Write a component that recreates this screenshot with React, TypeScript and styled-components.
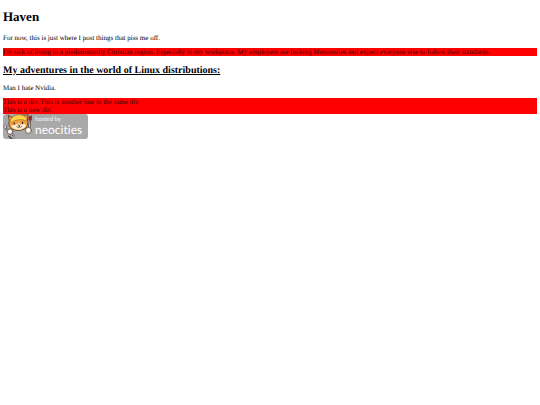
import React from "react";
import styled, { createGlobalStyle } from "styled-components";

const GlobalStyle = createGlobalStyle`
  body {
    margin: 0;
    background: #fff;
    color: #000;
    font-family: "Liberation Serif", "Times New Roman", serif;
    font-size: 7px;
    line-height: 8px;
    text-rendering: geometricPrecision;
  }
`;

const Page = styled.main`
  padding: 9px 3px 3px;
`;

const Title = styled.h1`
  margin: 0 0 9px;
  font-size: 13px;
  line-height: 16px;
`;

const Heading = styled.h2`
  margin: 9px 0 7px;
  font-size: 10px;
  line-height: 12px;
  text-decoration: underline;
`;

const Text = styled.p<{ $red?: boolean }>`
  margin: 0 0 6px;
  color: ${({ $red }) => ($red ? "#400" : "#000")};
  background: ${({ $red }) => ($red ? "#f00" : "transparent")};
`;

const Block = styled.div`
  color: #400;
  background: #f00;
`;

const BadgeLink = styled.a`
  display: block;
  width: fit-content;
`;

const BadgeArt = styled.svg`
  display: block;
  width: 85px;
  height: 25px;
  font-family: Lato, "Open Sans", sans-serif;
  font-variant-ligatures: none;
  line-height: 1;
`;

function NeocitiesBadge() {
  return (
    <BadgeArt viewBox="0 0 85 25" role="img" aria-label="Hosted by Neocities">
      <rect width="85" height="25" rx="3" fill="#a9a9a9" />
      <g strokeLinecap="round" strokeLinejoin="round">
        <path d="M5.5 1.5 9 3.5Q14 0 20 1.2L25.2 .8 24.3 6Q26 11.5 22 14.7 16 18 9 15.2 4.5 12 6.2 7Z" fill="#f3a13a" stroke="#4b3328" strokeWidth=".8" />
        <path d="M7 7.3Q8.5 1.8 15 .8 21 .4 24 5L22.8 6.7Q16 3.8 8 8.4Z" fill="#ffd34d" stroke="#a86c22" strokeWidth=".6" />
        <path d="M8.6 12.8Q9 10.2 13 10.4L16 9 18.7 10.2Q22.5 9.7 23.3 11.5 21 15.4 16 15.8 11 16 8.6 12.8Z" fill="#ffebc9" />
        <path d="M11.2 8.8v1.4M19.5 8v1.4" stroke="#30241f" strokeWidth="1.2" />
        <path d="m15 10.8 1.2.8 1.1-1M16.2 11.6v1.3M13.8 12.8q1.2 1.1 2.4.1 1.3.8 2.4-.4" fill="none" stroke="#3b2924" strokeWidth=".7" />
        <path d="m26.2 14.8.9-9.3" stroke="#3b2924" strokeWidth="2" />
        <path d="m26.3 14.8.7-8.8" stroke="#f1e8d8" strokeWidth=".8" />
        <path d="M25.8 5.8 26 2.8 28.5 1.8 28.4 5.8Z" fill="#b51f2c" stroke="#6c2026" strokeWidth=".6" />
        <ellipse cx="25.4" cy="16.4" rx="3" ry="3" fill="#fff5e8" stroke="#4b3a35" strokeWidth=".7" />
        <path d="m2.2 12.8 7 8.2" stroke="#433c3a" strokeWidth="2" />
        <path d="m2.2 12.6 7 8.2" stroke="#eee" strokeWidth=".9" />
        <ellipse cx="2.3" cy="12.6" rx="1.4" ry="1.9" fill="#ddd" stroke="#4d4745" strokeWidth=".6" />
        <path d="m8.8 19.6 2.6 2.7v2.2M8.5 20v3.3l2.6 1.2M5.8 22.3l2.4 2.1" fill="none" stroke="#4d4745" strokeWidth="1.4" />
        <path d="m8.8 19.6 2.6 2.7v2M8.5 20v3.1l2.4 1.1" fill="none" stroke="#eee" strokeWidth=".7" />
        <ellipse cx="7" cy="17.6" rx="2.8" ry="2.7" fill="#fff5e8" stroke="#4b3a35" strokeWidth=".7" />
      </g>
      <text x="32" y="7" fill="#f4f4f4" fontSize="6">hosted by</text>
      <text x="32" y="20" fill="#fff" fontSize="12">neocities</text>
    </BadgeArt>
  );
}

export default function App() {
  return (
    <>
      <GlobalStyle />
      <Page>
        <Title>Haven</Title>
        <Text>For now, this is just where I post things that piss me off.</Text>
        <Text $red>
          I'm sick of living in a predominantly Christian region. Especially in my workplace. My employers are fucking
          Mennonites and expect everyone else to follow their standards.
        </Text>
        <Heading>My adventures in the world of Linux distributions:</Heading>
        <Text>Man I hate Nvidia.</Text>
        <Block>
          This is a div. This is another line in the same div.
        </Block>
        <Block>This is a new div.</Block>
        <BadgeLink href="https://neocities.org">
          <NeocitiesBadge />
        </BadgeLink>
      </Page>
    </>
  );
}
